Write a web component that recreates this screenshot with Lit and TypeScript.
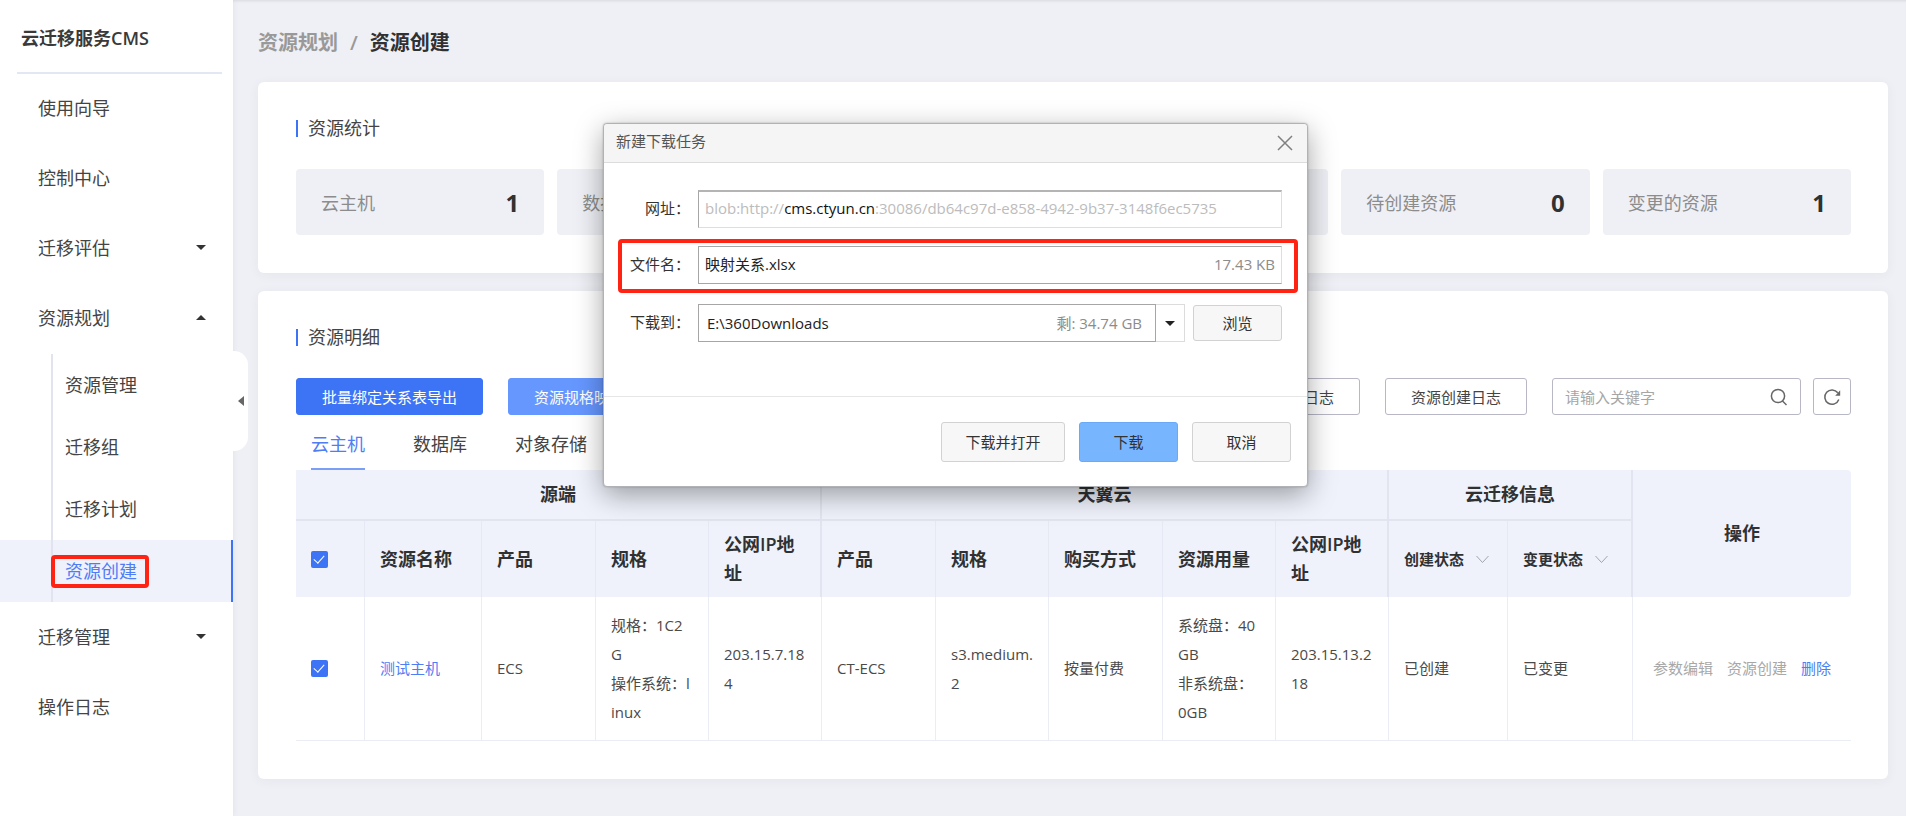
import { LitElement, html, css, nothing } from "lit";
import { customElement, property, state } from "lit/decorators.js";
import { classMap } from "lit/directives/class-map.js";

interface MenuItem {
  label: string;
  open?: boolean;
  expandable?: boolean;
  children?: string[];
}

const MENU: MenuItem[] = [
  { label: "使用向导" },
  { label: "控制中心" },
  { label: "迁移评估", expandable: true },
  {
    label: "资源规划",
    expandable: true,
    open: true,
    children: ["资源管理", "迁移组", "迁移计划", "资源创建"],
  },
  { label: "迁移管理", expandable: true },
  { label: "操作日志" },
];

@customElement("cms-sidebar")
export class CmsSidebar extends LitElement {
  @property() active = "资源创建";

  static styles = css`
    :host {
      display: block;
      position: relative;
      box-sizing: border-box;
      background: #fff;
      color: #444;
      font-size: 18px;
      box-shadow: 0 0 6px rgba(60, 70, 110, 0.08);
    }
    .brand {
      margin: 0 11px 0 17px;
      padding: 24px 0 20px 4px;
      border-bottom: 2px solid #e3e6f3;
      font-size: 18px;
      line-height: 28px;
      font-weight: 600;
      color: #3a3a3a;
    }
    ul {
      list-style: none;
      margin: 0;
      padding: 0;
    }
    a {
      box-sizing: border-box;
      display: flex;
      align-items: center;
      color: inherit;
      text-decoration: none;
    }
    .item {
      justify-content: space-between;
      height: 70px;
      padding: 0 27px 4px 38px;
    }
    .caret {
      border: 5px solid transparent;
      border-bottom-width: 0;
      border-top-color: #333;
    }
    .caret.up {
      border-bottom-width: 5px;
      border-top-width: 0;
      border-bottom-color: #333;
    }
    .sub {
      padding-bottom: 1px;
    }
    .sub a {
      height: 62px;
      margin-left: 51px;
      padding: 0 0 3px 12px;
      border-left: 2px solid #e1e4ee;
    }
    .sub li.active {
      background: #eff2fb;
      border-right: 2px solid #3c74f5;
      color: #4f7df5;
    }
    .sub li.active a {
      padding: 0;
    }
    .mark {
      box-sizing: border-box;
      display: flex;
      align-items: center;
      height: 33px;
      margin-left: -2px;
      padding: 0 8px 2px 10px;
      border: 4px solid #ff2313;
      border-radius: 4px;
    }
    .handle {
      position: absolute;
      left: 100%;
      top: 351px;
      width: 15px;
      height: 100px;
      padding: 0;
      border: 0;
      border-radius: 0 14px 14px 0;
      background: #fff;
      display: flex;
      align-items: center;
      justify-content: center;
    }
    .handle::before {
      content: "";
      border: 5px solid transparent;
      border-left-width: 0;
      border-right: 6px solid #666;
    }
  `;

  render() {
    return html`
      <div class="brand">云迁移服务CMS</div>
      <nav>
        <ul>
          ${MENU.map(
            (item) => html`<li>
              <a class="item" href="#">
                ${item.label}
                ${item.expandable
                  ? html`<span class=${classMap({ caret: true, up: !!item.open })}></span>`
                  : nothing}
              </a>
              ${item.children
                ? html`<ul class="sub">
                    ${item.children.map((child) =>
                      child === this.active
                        ? html`<li class="active">
                            <a href="#"><span class="mark">${child}</span></a>
                          </li>`
                        : html`<li><a href="#">${child}</a></li>`
                    )}
                  </ul>`
                : nothing}
            </li>`
          )}
        </ul>
      </nav>
      <button class="handle" aria-label="收起菜单"></button>
    `;
  }
}

const STATS = [
  { label: "云主机", value: 1 },
  { label: "数据库", value: 0 },
  { label: "对象存储", value: 0 },
  { label: "已创建资源", value: 1 },
  { label: "待创建资源", value: 0 },
  { label: "变更的资源", value: 1 },
];

@customElement("resource-stats")
export class ResourceStats extends LitElement {
  static styles = css`
    :host {
      display: grid;
      grid-template-columns: repeat(6, 1fr);
      gap: 13px;
    }
    .stat {
      display: flex;
      align-items: center;
      justify-content: space-between;
      height: 66px;
      padding: 0 25px;
      border-radius: 4px;
      background: #eff0f5;
      color: #8c8c8c;
      font-size: 18px;
      white-space: nowrap;
      overflow: hidden;
    }
    b {
      font-size: 24px;
      color: #303133;
    }
  `;

  render() {
    return STATS.map(
      (s) => html`<div class="stat"><span>${s.label}</span><b>${s.value}</b></div>`
    );
  }
}

const COLUMNS = [69, 117, 114, 113, 113, 114, 113, 114, 113, 113, 119, 125];

@customElement("resource-table")
export class ResourceTable extends LitElement {
  static styles = css`
    table {
      width: 100%;
      table-layout: fixed;
      border-collapse: separate;
      border-spacing: 0;
      font-size: 15px;
      line-height: 29px;
      color: #4a4a4a;
    }
    th,
    td {
      box-sizing: border-box;
      padding: 0 15px;
      text-align: left;
      word-break: break-all;
      border-right: 1px solid #ebedf5;
    }
    th {
      background: #eff2fb;
      font-size: 18px;
      font-weight: 600;
      color: #303133;
    }
    td {
      height: 144px;
      border-bottom: 1px solid #ebedf5;
    }
    th:last-child,
    td:last-child,
    th.ops {
      border-right: 0;
      text-align: center;
    }
    .groups th {
      height: 51px;
      text-align: center;
      border-bottom: 2px solid #e2e5ef;
      border-right: 2px solid #e2e5ef;
    }
    .groups th.ops {
      border: 0;
      border-radius: 0 4px 4px 0;
    }
    .fields th {
      height: 76px;
      text-align: left;
      border-right: 1px solid #e6e9f3;
    }
    .fields th.edge {
      border-right: 2px solid #e2e5ef;
    }
    input {
      appearance: none;
      display: block;
      width: 17px;
      height: 17px;
      margin: 0;
      border-radius: 2px;
      background: #3c74f5;
    }
    input:checked::after {
      content: "";
      display: block;
      box-sizing: border-box;
      width: 6px;
      height: 10px;
      margin: 2px 0 0 5px;
      border: solid #fff;
      border-width: 0 1px 1px 0;
      transform: rotate(42deg);
    }
    .filter {
      display: flex;
      align-items: center;
      gap: 12px;
      padding: 0;
      border: 0;
      background: none;
      font: 600 15px/29px "Open Sans", "Noto Sans CJK SC", sans-serif;
      color: #303133;
      white-space: nowrap;
    }
    .filter svg {
      width: 13px;
      height: 9px;
      flex: none;
    }
    a {
      color: #4f7df5;
      text-decoration: none;
    }
    .actions {
      display: flex;
      justify-content: center;
      gap: 14px;
      white-space: nowrap;
    }
    .actions button {
      padding: 0;
      border: 0;
      background: none;
      font: inherit;
      color: #4f7df5;
    }
    .actions button:disabled {
      color: #a8a8a8;
    }
  `;

  private filter(label: string) {
    return html`<button class="filter">
      ${label}
      <svg viewBox="0 0 13 9" fill="none" stroke="#a0a4ae">
        <path d="M.5 1l6 6.500 6-6.500" />
      </svg>
    </button>`;
  }

  render() {
    return html`<table>
      <colgroup>
        ${COLUMNS.map((w) => html`<col style="width:${w}px" />`)}
        <col />
      </colgroup>
      <thead>
        <tr class="groups">
          <th colspan="5">源端</th>
          <th colspan="5">天翼云</th>
          <th colspan="2">云迁移信息</th>
          <th class="ops" rowspan="2">操作</th>
        </tr>
        <tr class="fields">
          <th><input type="checkbox" checked aria-label="全选" /></th>
          <th>资源名称</th>
          <th>产品</th>
          <th>规格</th>
          <th class="edge">公网IP地址</th>
          <th>产品</th>
          <th>规格</th>
          <th>购买方式</th>
          <th>资源用量</th>
          <th class="edge">公网IP地址</th>
          <th>${this.filter("创建状态")}</th>
          <th class="edge">${this.filter("变更状态")}</th>
        </tr>
      </thead>
      <tbody>
        <tr>
          <td><input type="checkbox" checked aria-label="选择测试主机" /></td>
          <td><a href="#">测试主机</a></td>
          <td>ECS</td>
          <td>
            <div>规格：1C2G</div>
            <div>操作系统：linux</div>
          </td>
          <td>203.15.7.184</td>
          <td>CT-ECS</td>
          <td>s3.medium.2</td>
          <td>按量付费</td>
          <td>
            <div>系统盘：40GB</div>
            <div>非系统盘：0GB</div>
          </td>
          <td>203.15.13.218</td>
          <td>已创建</td>
          <td>已变更</td>
          <td>
            <div class="actions">
              <button disabled>参数编辑</button>
              <button disabled>资源创建</button>
              <button>删除</button>
            </div>
          </td>
        </tr>
      </tbody>
    </table>`;
  }
}

@customElement("download-dialog")
export class DownloadDialog extends LitElement {
  static styles = css`
    :host {
      display: block;
      box-sizing: border-box;
      border: 1px solid #b0b2b6;
      border-radius: 4px;
      background: #fff;
      box-shadow: 0 8px 28px rgba(0, 0, 0, 0.36), 0 0 2px rgba(0, 0, 0, 0.25);
      font-size: 15px;
      line-height: 20px;
      color: #333;
    }
    header {
      display: flex;
      justify-content: space-between;
      align-items: center;
      height: 38px;
      padding: 0 14px 0 12px;
      border-bottom: 1px solid #dcdcdc;
      border-radius: 4px 4px 0 0;
      background: #f5f5f5;
    }
    h2 {
      margin: 0;
      padding-bottom: 5px;
      font-size: 15px;
      font-weight: 400;
      color: #555;
    }
    button,
    input {
      box-sizing: border-box;
      font: inherit;
      color: inherit;
    }
    .close {
      display: flex;
      padding: 0;
      border: 0;
      background: none;
    }
    .close svg {
      width: 16px;
      height: 16px;
    }
    .form {
      display: grid;
      gap: 4px;
      padding: 20px 9px 47px 14px;
    }
    .row {
      display: flex;
      align-items: center;
      padding: 3px 12px 3px 0;
      border: 4px solid transparent;
      border-radius: 4px;
    }
    .row.marked {
      padding-bottom: 5px;
      border-color: #ff2313;
    }
    .row > label {
      width: 68px;
      margin-right: 8px;
      padding-bottom: 3px;
      text-align: right;
      flex: none;
    }
    .field {
      box-sizing: border-box;
      flex: 1;
      min-width: 0;
      display: flex;
      align-items: center;
      height: 38px;
      padding: 0 6px 3px;
      border: 1px solid #a6a6a6;
    }
    .field input {
      flex: 1;
      min-width: 0;
      padding: 0;
      border: 0;
      outline: 0;
      background: none;
      color: #222;
    }
    .url {
      border-color: #b4b4b4 #dedede #dedede #a6a6a6;
      border-top-width: 2px;
      color: #bcbcbc;
      white-space: nowrap;
      overflow: hidden;
    }
    .url b {
      font-weight: 400;
      color: #111;
    }
    .name {
      border-right-color: #dedede;
    }
    .note {
      color: #8c8c8c;
    }
    .path {
      padding: 0 13px 1px 8px;
    }
    .drop {
      width: 29px;
      height: 38px;
      padding: 0;
      border: 1px solid #dcdcdc;
      border-left: 0;
      background: #fff;
      display: flex;
      align-items: center;
      justify-content: center;
    }
    .drop::before {
      content: "";
      border: 5px solid transparent;
      border-bottom: 0;
      border-top-color: #222;
    }
    .btn {
      height: 40px;
      border: 1px solid #d2d2d2;
      border-radius: 3px;
      background: #f7f7f7;
      width: 99px;
      padding: 0;
    }
    .btn.browse {
      height: 36px;
      width: 89px;
      margin-left: 8px;
    }
    .btn.wide {
      width: 124px;
    }
    .btn.primary {
      border-color: #69a9f8;
      background: #77b5ff;
    }
    footer {
      display: flex;
      justify-content: flex-end;
      gap: 14px;
      padding: 25px 16px 24px;
      border-top: 1px solid #e6e6e6;
    }
  `;

  render() {
    return html`
      <header>
        <h2>新建下载任务</h2>
        <button class="close" aria-label="关闭">
          <svg viewBox="0 0 16 16" fill="none" stroke="#808080" stroke-width="1.500">
            <path d="M1 1l14 14M15 1L1 15" />
          </svg>
        </button>
      </header>
      <div class="form">
        <div class="row">
          <label for="url">网址：</label>
          <output id="url" class="field url"
            >blob:http://<b>cms.ctyun.cn</b>:30086/db64c97d-e858-4942-9b37-3148f6ec5735</output
          >
        </div>
        <div class="row marked">
          <label for="name">文件名：</label>
          <div class="field name">
            <input id="name" type="text" value="映射关系.xlsx" />
            <span class="note">17.43 KB</span>
          </div>
        </div>
        <div class="row">
          <label for="path">下载到：</label>
          <div class="field path">
            <input id="path" type="text" value="E:\\360Downloads" />
            <span class="note">剩: 34.74 GB</span>
          </div>
          <button class="drop" aria-label="选择目录"></button>
          <button class="btn browse">浏览</button>
        </div>
      </div>
      <footer>
        <button class="btn wide">下载并打开</button>
        <button class="btn primary">下载</button>
        <button class="btn">取消</button>
      </footer>
    `;
  }
}

@customElement("app-root")
export class AppRoot extends LitElement {
  @state() private tab = "云主机";

  static styles = css`
    :host {
      display: grid;
      grid-template-columns: 233px minmax(0, 1fr);
      position: relative;
      min-height: 100vh;
      background: #eff0f5;
      font-family: "Open Sans", "Noto Sans CJK SC", sans-serif;
      color: #303133;
    }
    cms-sidebar {
      z-index: 1;
    }
    main {
      padding: 28px 18px 30px 25px;
      box-shadow: inset 0 3px 3px -2px rgba(0, 0, 0, 0.1);
    }
    .crumbs {
      display: flex;
      gap: 12px;
      margin-bottom: 24px;
      font-size: 20px;
      line-height: 30px;
      font-weight: 600;
      color: #999;
    }
    .crumbs a {
      color: inherit;
      text-decoration: none;
    }
    .crumbs strong {
      font-weight: 600;
      color: #303133;
    }
    section {
      padding: 33px 37px 38px 38px;
      border-radius: 6px;
      background: #fff;
      box-shadow: 0 2px 12px rgba(50, 60, 100, 0.05);
    }
    section + section {
      margin-top: 18px;
    }
    h2 {
      display: flex;
      align-items: center;
      gap: 10px;
      margin: 0 0 28px;
      font-size: 18px;
      line-height: 26px;
      font-weight: 400;
      color: #444;
    }
    h2::before {
      content: "";
      width: 2px;
      height: 17px;
      background: #3c74f5;
    }
    .toolbar {
      display: flex;
      gap: 25px;
    }
    button,
    input {
      font: inherit;
    }
    .btn {
      box-sizing: border-box;
      height: 37px;
      padding: 0 25px;
      border: 1px solid #b7b7c5;
      border-radius: 3px;
      background: #fff;
      color: #444;
      font-size: 15px;
      white-space: nowrap;
    }
    .btn.primary {
      border-color: #3c74f5;
      background: #3c74f5;
      color: #fff;
    }
    .btn.soft {
      border-color: #6697ff;
      background: #6697ff;
      color: #fff;
    }
    .push {
      margin-left: auto;
    }
    .query {
      display: flex;
      gap: 12px;
    }
    .search {
      box-sizing: border-box;
      display: flex;
      align-items: center;
      width: 249px;
      height: 37px;
      padding: 0 12px;
      border: 1px solid #b7b7c5;
      border-radius: 3px;
    }
    .search input {
      flex: 1;
      min-width: 0;
      padding: 0;
      border: 0;
      outline: 0;
      background: none;
      font-size: 15px;
    }
    .search input::placeholder {
      color: #a6a6a6;
    }
    .icon {
      width: 18px;
      height: 18px;
      flex: none;
      fill: none;
      stroke: #666;
      stroke-width: 1.5;
    }
    .icon .tip {
      fill: #666;
      stroke: none;
    }
    .refresh {
      display: flex;
      align-items: center;
      justify-content: center;
      width: 38px;
      padding: 0;
    }
    .tabs {
      display: flex;
      gap: 48px;
      padding-left: 15px;
    }
    .tabs button {
      height: 55px;
      padding: 3px 0 0;
      border: 0;
      border-bottom: 2px solid transparent;
      background: none;
      font-size: 18px;
      color: #444;
    }
    .tabs button.on {
      color: #4f7df5;
      border-bottom-color: #7a9ff5;
    }
    download-dialog {
      position: absolute;
      left: 603px;
      top: 123px;
      width: 705px;
      z-index: 2;
    }
  `;

  render() {
    return html`
      <cms-sidebar></cms-sidebar>
      <main>
        <nav class="crumbs">
          <a href="#">资源规划</a><span>/</span><strong>资源创建</strong>
        </nav>
        <section>
          <h2>资源统计</h2>
          <resource-stats></resource-stats>
        </section>
        <section>
          <h2>资源明细</h2>
          <div class="toolbar">
            <button class="btn primary">批量绑定关系表导出</button>
            <button class="btn soft">资源规格映射</button>
            <button class="btn push">资源变更日志</button>
            <button class="btn">资源创建日志</button>
            <div class="query">
              <div class="search">
                <input type="text" placeholder="请输入关键字" aria-label="关键字" />
                <svg class="icon" viewBox="0 0 18 18">
                  <circle cx="8" cy="8" r="6.600" />
                  <path d="M12.500 13l4 4" />
                </svg>
              </div>
              <button class="btn refresh" aria-label="刷新">
                <svg class="icon" viewBox="0 0 18 18">
                  <path d="M15.800 11.500A7.200 7.200 0 1 1 14.800 4.800" />
                  <path class="tip" d="M17.200 2.200v5.600h-5z" />
                </svg>
              </button>
            </div>
          </div>
          <div class="tabs">
            ${["云主机", "数据库", "对象存储"].map(
              (t) => html`<button
                class=${classMap({ on: t === this.tab })}
                @click=${() => (this.tab = t)}
              >
                ${t}
              </button>`
            )}
          </div>
          <resource-table></resource-table>
        </section>
      </main>
      <download-dialog role="dialog" aria-label="新建下载任务"></download-dialog>
    `;
  }
}
